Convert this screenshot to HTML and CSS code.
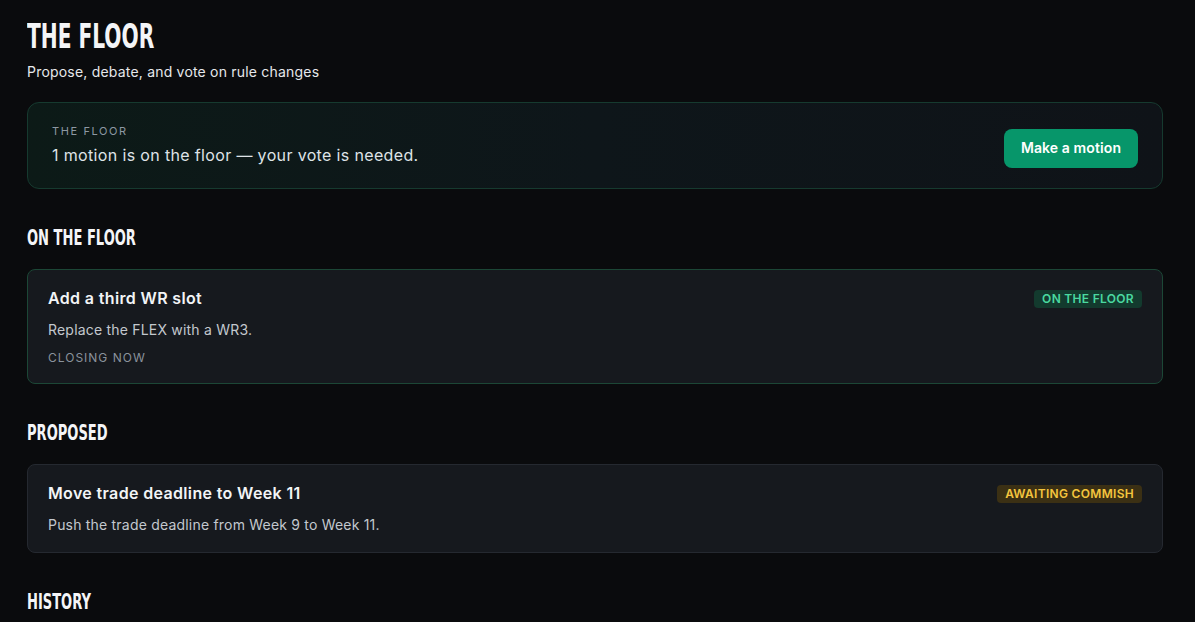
FILE: index.html
```html
<!DOCTYPE html>
<html lang="en">
<head>
<meta charset="utf-8">
<title>The Floor</title>
<link rel="stylesheet" href="styles.css">
</head>
<body>
<main class="page">
  <header class="page-head">
    <h1 class="display title"><span>THE FLOOR</span></h1>
    <p class="subtitle">Propose, debate, and vote on rule changes</p>
  </header>

  <section class="banner">
    <div class="banner-text">
      <div class="banner-label">THE FLOOR</div>
      <div class="banner-msg">1 motion is on the floor — your vote is needed.</div>
    </div>
    <button class="btn-primary">Make a motion</button>
  </section>

  <section class="section">
    <h2 class="display section-title"><span>ON THE FLOOR</span></h2>
    <article class="card card-live">
      <div class="card-row">
        <h3 class="card-title">Add a third WR slot</h3>
        <span class="badge badge-green">ON THE FLOOR</span>
      </div>
      <p class="card-desc">Replace the FLEX with a WR3.</p>
      <div class="card-meta">CLOSING NOW</div>
    </article>
  </section>

  <section class="section">
    <h2 class="display section-title"><span>PROPOSED</span></h2>
    <article class="card">
      <div class="card-row">
        <h3 class="card-title">Move trade deadline to Week 11</h3>
        <span class="badge badge-amber">AWAITING COMMISH</span>
      </div>
      <p class="card-desc">Push the trade deadline from Week 9 to Week 11.</p>
    </article>
  </section>

  <section class="section">
    <h2 class="display section-title"><span>HISTORY</span></h2>
  </section>
</main>
</body>
</html>
```

FILE: styles.css
```css
* { box-sizing: border-box; }
html, body { margin: 0; padding: 0; }
body {
  background: #0a0b0d;
  color: #eef0f3;
  font-family: Inter, "Noto Sans", "Liberation Sans", sans-serif;
  overflow: hidden;
}
.page {
  padding: 16px 32px 0 27px;
}
.display {
  font-family: "DejaVu Sans Condensed", "Liberation Sans", sans-serif;
  font-weight: 700;
  margin: 0;
  color: #f4f5f7;
  white-space: nowrap;
}
.display span {
  display: inline-block;
  transform: scaleX(0.66);
  transform-origin: left center;
}
.title {
  font-size: 34px;
  line-height: 40px;
}
.subtitle {
  margin: 6px 0 0;
  font-size: 14px;
  line-height: 20px;
  letter-spacing: 0.2px;
  color: #e6e8eb;
}
.banner {
  margin-top: 20px;
  display: flex;
  align-items: center;
  justify-content: space-between;
  padding: 20px 24px 21px;
  border: 1px solid #163a2f;
  border-radius: 12px;
  background: linear-gradient(90deg, #0c1a17 0%, #0e161a 50%, #0f1318 100%);
}
.banner-label {
  font-size: 11px;
  line-height: 16px;
  letter-spacing: 1.6px;
  color: #8d98a3;
}
.banner-msg {
  margin-top: 4px;
  font-size: 16px;
  line-height: 24px;
  letter-spacing: 0.35px;
  color: #dfe3e7;
}
.btn-primary {
  margin: 6px 0 -1px;
  font-family: inherit;
  font-size: 14px;
  font-weight: 600;
  line-height: 20px;
  letter-spacing: 0.1px;
  color: #ffffff;
  background: #07966a;
  border: none;
  border-radius: 8px;
  padding: 9px 0 10px;
  width: 134px;
}
.section {
  margin-top: 35px;
}
.section-title {
  font-size: 22px;
  line-height: 28px;
  margin-bottom: 17px;
}
.card {
  background: #16191e;
  border: 1px solid #252930;
  border-radius: 8px;
  padding: 16px 20px 17px;
}
.card-live {
  border-color: #1c4736;
}
.card-row {
  display: flex;
  align-items: center;
  justify-content: space-between;
}
.card-title {
  margin: 0;
  font-size: 16px;
  line-height: 24px;
  font-weight: 600;
  letter-spacing: 0.35px;
  color: #f2f4f6;
}
.card-desc {
  margin: 10px 0 0;
  font-size: 14px;
  line-height: 20px;
  letter-spacing: 0.2px;
  color: #c3c8ce;
}
.card-meta {
  margin-top: 10px;
  font-size: 12px;
  line-height: 16px;
  letter-spacing: 1px;
  color: #8a929c;
}
.badge {
  margin-top: 2px;
  font-size: 12px;
  line-height: 14px;
  font-weight: 600;
  letter-spacing: 0.3px;
  padding: 2px 8px;
  border-radius: 4px;
}
.badge-green {
  color: #4ad9a0;
  background: #133a2e;
}
.badge-amber {
  color: #f4c53e;
  background: #3b3014;
}
```
